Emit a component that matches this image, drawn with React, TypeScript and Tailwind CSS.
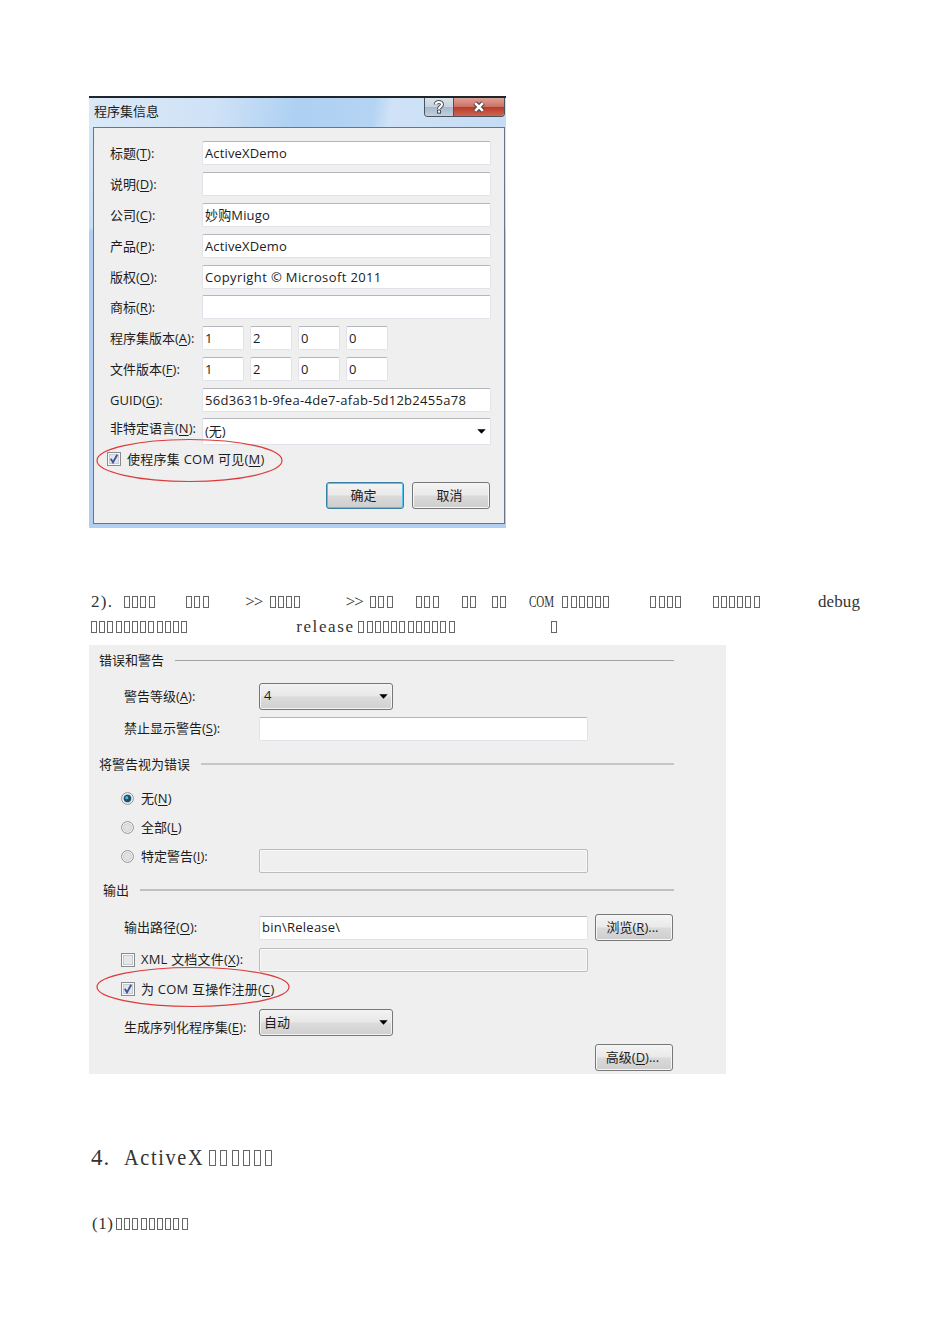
import type { ReactNode } from "react";
import clsx from "clsx";

const SERIF = "font-['Liberation_Serif','Noto_Sans_CJK_SC',serif]";
const UI = "font-['Open_Sans','Noto_Sans_CJK_SC',sans-serif]";

type Run = { w: string; text?: string; boxes?: number; style?: string };

const LINE_ONE: Run[] = [
  { w: "w-[33px]", text: "2).", style: "tracking-[1.3px]" },
  { w: "w-[62.3px]", boxes: 4 },
  { w: "w-[59px]", boxes: 3 },
  { w: "w-[24.5px]", text: ">>", style: "tracking-[-1.2px]" },
  { w: "w-[76px]", boxes: 4 },
  { w: "w-[24.5px]", text: ">>", style: "tracking-[-1.2px]" },
  { w: "w-[46px]", boxes: 3 },
  { w: "w-[45.3px]", boxes: 3 },
  { w: "w-[30px]", boxes: 2 },
  { w: "w-[37.4px]", boxes: 2 },
  { w: "w-[33.4px]", text: "COM", style: "scale-x-[0.65] origin-left" },
  { w: "w-[88px]", boxes: 6 },
  { w: "w-[62.3px]", boxes: 4 },
  { w: "w-[105.3px]", boxes: 6 },
  { w: "w-[60px]", text: "debug", style: "tracking-[0.1px]" },
];

const LINE_TWO: Run[] = [
  { w: "w-[205.2px]", boxes: 12 },
  { w: "w-[62.3px]", text: "release", style: "tracking-[1.6px]" },
  { w: "w-[193px]", boxes: 12 },
  { w: "w-[20px]", boxes: 1 },
];

const FIELDS = [
  { label: "标题", hotkey: "T", value: "ActiveXDemo" },
  { label: "说明", hotkey: "D", value: "" },
  { label: "公司", hotkey: "C", value: "妙购Miugo" },
  { label: "产品", hotkey: "P", value: "ActiveXDemo" },
  { label: "版权", hotkey: "O", value: "Copyright © Microsoft 2011", style: "tracking-[0.38px]" },
  { label: "商标", hotkey: "R", value: "" },
];

const VERSIONS = [
  { label: "程序集版本", hotkey: "A" },
  { label: "文件版本", hotkey: "F" },
];

function Boxes({ count, large }: { count: number; large?: boolean }) {
  return (
    <span className={clsx("flex", large ? "gap-[4.3px]" : "gap-[2.2px]")}>
      {Array.from({ length: count }, (_, i) => (
        <span
          key={i}
          className={clsx(
            "shrink-0 border border-[#666]",
            large ? "w-[7px] h-4" : "w-[6px] h-3"
          )}
        />
      ))}
    </span>
  );
}

function TextLine({ runs }: { runs: Run[] }) {
  return (
    <div className="flex items-center h-[25px] whitespace-pre">
      {runs.map((run, i) => (
        <span key={i} className={clsx("shrink-0", run.w)}>
          {run.boxes ? (
            <Boxes count={run.boxes} />
          ) : (
            <span className={clsx("inline-block", run.style)}>{run.text}</span>
          )}
        </span>
      ))}
    </div>
  );
}

function Label({ text, hotkey, end = ":", className }: { text: string; hotkey: string; end?: string; className?: string }) {
  return (
    <span className={clsx("shrink-0 whitespace-nowrap", className)}>
      {text}
      <span>
        (<span className="underline underline-offset-2">{hotkey}</span>){end}
      </span>
    </span>
  );
}

function Field({ value, className, disabled }: { value?: string; className?: string; disabled?: boolean }) {
  return (
    <div
      className={clsx(
        "shrink-0 flex items-center h-6 px-[2px] rounded-[2px] border whitespace-nowrap",
        disabled
          ? "bg-[#efefef] border-[#bcbcbc] shadow-[inset_0_0_0_1px_#f8f8f8]"
          : "bg-white border-[#e2e3ea] border-t-[#b4b6bc]",
        className
      )}
    >
      {value}
    </div>
  );
}

function Arrow() {
  return (
    <svg width="9" height="5" viewBox="0 0 9 5" className="shrink-0">
      <path d="M0.3 0.3h8.4L4.5 4.8z" fill="#000" />
    </svg>
  );
}

function Button({ children, primary }: { children: ReactNode; primary?: boolean }) {
  return (
    <button
      className={clsx(
        "shrink-0 flex items-center justify-center w-[78px] h-[27px] pb-[2px] pr-[3px] rounded-[3px] border bg-[linear-gradient(#f4f4f4,#e9e9e9_49%,#dadada_51%,#cecece)] whitespace-nowrap",
        primary
          ? "border-[#3c7fa5] shadow-[inset_0_0_0_1px_#55c4e8]"
          : "border-[#777] shadow-[inset_0_0_0_1px_#f6f6f6]"
      )}
    >
      {children}
    </button>
  );
}

function Select({ value }: { value: string }) {
  return (
    <div className="shrink-0 flex items-center justify-between w-[134px] h-[27px] pl-1 pr-[4px] rounded-[3px] border border-[#777] bg-[linear-gradient(#f2f2f2,#e8e8e8_49%,#dcdcdc_51%,#d0d0d0)] shadow-[inset_0_0_0_1px_#f4f4f4]">
      <span className="pb-[2px]">{value}</span>
      <Arrow />
    </div>
  );
}

function Checkbox({ checked }: { checked?: boolean }) {
  return (
    <svg width="14" height="14" viewBox="0 0 14 14" className="shrink-0">
      <rect x="0.5" y="0.5" width="13" height="13" fill="#f8f8f8" stroke="#8a8b8c" />
      <rect x="2.5" y="2.5" width="9" height="9" fill="#e4e6e9" stroke="#c6cbd0" />
      {checked && <path d="M3.8 6.8l2.2 3.6 4.2-7.6" fill="none" stroke="#3f55a0" strokeWidth="1.9" />}
    </svg>
  );
}

function Radio({ checked }: { checked?: boolean }) {
  return (
    <svg width="13" height="13" viewBox="0 0 13 13" className="shrink-0">
      <circle cx="6.5" cy="6.5" r="5.9" fill="#f6f6f6" stroke="#909293" />
      <circle cx="6.5" cy="6.5" r="4" fill="#dfe1e3" stroke="#cdd0d2" />
      {checked && (
        <>
          <circle cx="6.5" cy="6.5" r="3.7" fill="#164f70" />
          <circle cx="5.8" cy="5.7" r="1.6" fill="#55b2da" />
        </>
      )}
    </svg>
  );
}

function GroupTitle({ text, className, line }: { text: string; className?: string; line: string }) {
  return (
    <div className={clsx("flex items-center h-5 pr-[52px]", className)}>
      <span className="shrink-0 pb-px">{text}</span>
      <span className={clsx("flex-1", line)} />
    </div>
  );
}

function AssemblyDialog() {
  return (
    <div className="relative w-[417px] h-[432px] px-1 pr-[1px] pb-1 border-t-2 border-[#20252b] bg-[linear-gradient(#d7e7f7,#c8e0f6_30%,#b2cff0_31%,#b2cff0)]">
      {/* --- TITLE BAR --- */}
      <div className="-ml-1 -mr-[1px] pl-[5px] pr-[1px] flex justify-between h-[29px] bg-[linear-gradient(100deg,#dbe9f7,#cfe2f6_30%,#add0f2_50%,#b5d4f3_68%,#cfe2f7_72%,#c5dcf4)]">
        <span className="leading-[27px]">程序集信息</span>
        <div className="flex h-[19px] rounded-b-[4px] overflow-hidden border border-t-0 border-[#4a525c]">
          <div className="w-[29px] flex justify-center items-center border-r border-[#4a525c] bg-[linear-gradient(#d9e3ec,#c6d2de_48%,#a6b7c9_50%,#bfd0e0)]">
            <svg width="12" height="14" viewBox="0 0 12 14">
              <path d="M2.8 4.6C2.8 1.2 9 1.2 9 4.5 9 6.7 6 6.5 6 9" fill="none" stroke="#4a5058" strokeWidth="4" />
              <rect x="4" y="9.7" width="4" height="4" fill="#4a5058" />
              <path d="M2.8 4.6C2.8 1.2 9 1.2 9 4.5 9 6.7 6 6.5 6 9" fill="none" stroke="#fff" strokeWidth="2" />
              <rect x="5" y="10.6" width="2" height="2" fill="#fff" />
            </svg>
          </div>
          <div className="w-[50px] flex justify-center items-center bg-[linear-gradient(#dda096,#cd7164_48%,#b83a28_50%,#cd6452)]">
            <svg width="14" height="12" viewBox="0 0 14 12">
              <path d="M3 2l8 8M11 2l-8 8" stroke="#5b4545" strokeWidth="4.8" />
              <path d="M3.2 2.2l7.6 7.6M10.8 2.2l-7.6 7.6" stroke="#fff" strokeWidth="2.6" />
            </svg>
          </div>
        </div>
      </div>

      <div className="h-[397px] pt-[12px] pl-4 border border-[#66758a] bg-[#efefef]">
        {FIELDS.map((f) => (
          <div key={f.hotkey} className="flex items-center h-[30.9px] pb-[5px]">
            <Label text={f.label} hotkey={f.hotkey} className="w-[92px]" />
            <Field value={f.value} className={clsx("w-[289px]", f.style ?? "tracking-[0.15px]")} />
          </div>
        ))}
        {VERSIONS.map((v) => (
          <div key={v.hotkey} className="flex items-center h-[30.9px] pb-[5px]">
            <Label text={v.label} hotkey={v.hotkey} className="w-[92px]" />
            <div className="flex gap-[6px]">
              {["1", "2", "0", "0"].map((n, i) => (
                <Field key={i} value={n} className="w-[42px]" />
              ))}
            </div>
          </div>
        ))}
        <div className="flex items-center h-[30.9px] pb-[5px]">
          <Label text="GUID" hotkey="G" className="w-[92px]" />
          <Field value="56d3631b-9fea-4de7-afab-5d12b2455a78" className="w-[289px] tracking-[0.3px]" />
        </div>
        <div className="flex items-start h-[31px]">
          <Label text="非特定语言" hotkey="N" className="w-[92px]" />
          <div className="flex items-center justify-between w-[289px] h-[27px] pl-[2px] pr-[4px] rounded-[2px] bg-white border border-[#e2e3ea] border-t-[#b4b6bc]">
            <span className="pb-[2px]">(无)</span>
            <Arrow />
          </div>
        </div>
        <div className="-ml-[3px] flex items-center gap-[6px] h-5">
          <Checkbox checked />
          <Label text="使程序集 COM 可见" hotkey="M" end="" className="tracking-[0.25px]" />
        </div>
        <div className="flex gap-2 mt-[13px] ml-[216px]">
          <Button primary>确定</Button>
          <Button>取消</Button>
        </div>
      </div>

      <svg className="absolute left-[7px] top-[340px]" width="188" height="45" viewBox="0 0 188 45">
        <ellipse cx="93.5" cy="22.5" rx="92.5" ry="21" fill="none" stroke="#dd3a3a" strokeWidth="1.2" />
      </svg>
    </div>
  );
}

function BuildPanel() {
  return (
    <div className="relative w-[637px] h-[429px] pt-[5px] bg-[#efefef]">
      <GroupTitle text="错误和警告" className="pl-[10px] gap-[11px]" line="h-px bg-[#a2a2a2]" />
      <div className="flex items-center h-7 mt-3 pl-[35px]">
        <Label text="警告等级" hotkey="A" className="w-[135px]" />
        <Select value="4" />
      </div>
      <div className="flex items-center h-[25px] mt-[6px] pl-[35px]">
        <Label text="禁止显示警告" hotkey="S" className="w-[135px] pb-px" />
        <Field className="w-[329px]" />
      </div>

      <GroupTitle text="将警告视为错误" className="mt-[13px] pl-[10px] gap-[11px]" line="h-[2px] bg-[#c6c6c6]" />
      <div className="mt-[10px] pl-8">
        <div className="flex items-center gap-[7px] h-[29px]">
          <Radio checked />
          <Label text="无" hotkey="N" end="" className="pb-[2px]" />
        </div>
        <div className="flex items-center gap-[7px] h-[29px]">
          <Radio />
          <Label text="全部" hotkey="L" end="" className="pb-[2px]" />
        </div>
        <div className="flex items-center h-[29px]">
          <Radio />
          <Label text="特定警告" hotkey="I" className="ml-[7px] w-[118px] pb-[2px]" />
          <Field disabled className="w-[329px] mt-[9px]" />
        </div>
      </div>

      <GroupTitle text="输出" className="mt-[9px] pl-[14px] gap-[11px]" line="h-[2px] bg-[#c0c0c0]" />
      <div className="flex items-center h-[27px] mt-[14px] pl-[35px]">
        <Label text="输出路径" hotkey="O" className="w-[135px] pb-[2px]" />
        <Field value="bin\Release\" className="w-[329px] mr-[7px] pb-px tracking-[0.25px]" />
        <Button>
          <Label text="浏览" hotkey="R" end="..." />
        </Button>
      </div>
      <div className="flex items-center h-[30px] mt-1 pl-8">
        <Checkbox />
        <Label text="XML 文档文件" hotkey="X" className="ml-[6px] w-[118px] pb-[2px] tracking-[0.2px]" />
        <Field disabled className="w-[329px]" />
      </div>
      <div className="flex items-center gap-[6px] h-7 pl-8">
        <Checkbox checked />
        <Label text="为 COM 互操作注册" hotkey="C" end="" className="tracking-[0.2px]" />
      </div>
      <div className="flex items-center h-[27px] mt-[6px] pl-[35px]">
        <Label text="生成序列化程序集" hotkey="E" className="w-[135px] mt-[9px]" />
        <Select value="自动" />
      </div>
      <div className="flex justify-end mt-2 pr-[53px]">
        <Button>
          <Label text="高级" hotkey="D" end="..." />
        </Button>
      </div>

      <svg className="absolute left-[7px] top-[321px]" width="196" height="42" viewBox="0 0 196 42">
        <ellipse cx="97" cy="21" rx="96" ry="19.5" fill="none" stroke="#dd3a3a" strokeWidth="1.2" />
      </svg>
    </div>
  );
}

export default function App() {
  return (
    <main className={clsx("w-[950px] h-[1344px] bg-white pt-24 pl-[89px] overflow-hidden text-[13px] leading-5 text-[#1c1c1c]", UI)}>
      <AssemblyDialog />

      <div className={clsx("mt-[61px] pl-[2px] text-[17px] text-[#333]", SERIF)}>
        <TextLine runs={LINE_ONE} />
        <TextLine runs={LINE_TWO} />
      </div>

      <div className="mt-[6px]">
        <BuildPanel />
      </div>

      <h2 className={clsx("mt-[68px] pl-[2px] flex items-center h-[31px] text-[23px] text-[#333]", SERIF)}>
        <span className="w-[33px] tracking-[1px]">4.</span>
        <span className="w-[85px]">
          <span className="inline-block origin-left scale-x-[0.88] tracking-[1.9px]">ActiveX</span>
        </span>
        <Boxes count={6} large />
      </h2>
      <p className={clsx("mt-[38px] pl-[3px] flex items-center h-[26px] text-[17px] text-[#333]", SERIF)}>
        <span className="w-6 tracking-[0.5px]">(1)</span>
        <Boxes count={9} />
      </p>
    </main>
  );
}
